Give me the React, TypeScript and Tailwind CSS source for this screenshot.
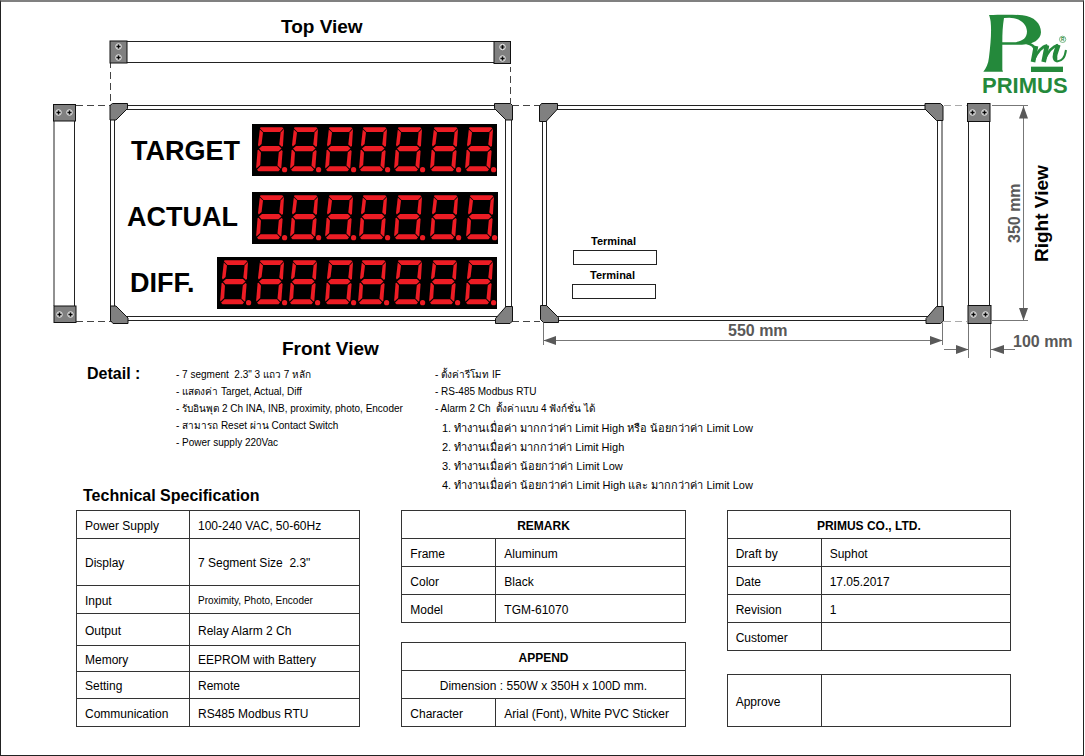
import type { ReactNode } from "react";

const SEGMENTS = [
  "4.5,3.3 26,3.3 27.5,4.2 24,8 7.5,8 4,4.5",
  "3.8,5.5 7,8.6 5.6,20 2.8,22.6 2,21",
  "28,5 27,21.5 26,23 23.3,20.5 24.6,8.5",
  "3,24.5 6,22 23,22 25.5,24.5 22.5,27.3 5.5,27.3",
  "1.6,26 2.6,25.8 5,28.4 4.2,41 .5,44.5 .2,43",
  "25.5,26 26.6,27 25.3,44 24.5,44.5 21.5,41.5 22.8,28.2",
  "4.5,42.3 21,42.3 24,45.5 22.5,47.3 2.5,47.3 1,45.8",
];

function Led({ x, y, width, digits }: { x: number; y: number; width: number; digits: number[] }) {
  return (
    <g>
      <rect x={x} y={y} width={width} height="52" fill="#000" />
      {digits.map((d) => (
        <g key={d} transform={`translate(${d} ${y})`} fill="#ed1c24">
          {SEGMENTS.map((points) => (
            <polygon key={points} points={points} />
          ))}
          <circle cx="28.6" cy="45.7" r="2.6" />
        </g>
      ))}
    </g>
  );
}

function Screw({ x, y }: { x: number; y: number }) {
  return (
    <g transform={`translate(${x} ${y})`} fill="none">
      <circle r="2.8" fill="#888" stroke="#e6e6e6" strokeWidth="1" />
      <path d="M-1.9 0H1.9M0-1.9V1.9" stroke="#000" strokeWidth="0.9" />
    </g>
  );
}

type Box = [number, number, number, number];

function Bracket({ box: [x, y, w, h], screws }: { box: Box; screws: [number, number][] }) {
  return (
    <g>
      <rect x={x} y={y} width={w} height={h} fill="#808080" stroke="#111" />
      {screws.map(([sx, sy]) => (
        <Screw key={`${sx}-${sy}`} x={sx} y={sy} />
      ))}
    </g>
  );
}

const CORNERS = [
  "110,105.5 112.5,103.5 127.5,103.5 127.5,108.5 116,120 110,120",
  "494.5,103.5 510.5,103.5 512.5,105.5 512.5,120 506,120 494.5,108.5",
  "110.5,306 116,306 128,318 128,323.5 113,323.5 110.5,320.5",
  "506,306.5 512.5,306.5 512.5,321 510,323.5 495.5,323.5 495.5,318.5",
  "539.5,106 541.5,103.5 557.5,103.5 557.5,109 546,121.5 539.5,121.5",
  "925,103.5 940.5,103.5 943,106 943,120.5 936.5,120.5 925,109",
  "540.5,305.5 546.5,305.5 558.5,317.5 558.5,322.5 543.5,322.5 540.5,319.5",
  "936.5,306.5 943.5,306.5 943.5,321 940.5,323.5 926,323.5 926,318.5",
];

function Logo() {
  return (
    <g>
      <g transform="translate(900 0) scale(.3333)" fill="#24893b">
        <path
          fillRule="evenodd"
          d="M267 45C300 44 340 43 368 46C402 50 423 70 423 97C422 119 400 134 366 134L307 134L307 209L309 215H250C258 206 265 192 267 172C272 130 275 95 272 65C271 57 269 50 267 45ZM312 54C308 78 307 100 307 127L340 127C366 126 381 115 381 94C380 70 358 54 328 53Z"
        />
        <g fill="none" stroke="#24893b">
          <path d="M380 129C395 132 404 140 406 152" strokeWidth="8" />
          <path d="M408 138L399 186M441 136L431 186" strokeWidth="14" />
          <path d="M401 180C410 160 422 140 442 136M433 180C442 160 455 139 474 135" strokeWidth="8" />
          <path d="M475 134L466 162C463 174 466 180 472 180" strokeWidth="14" />
          <path d="M468 183C486 187 495 172 498 150" strokeWidth="6" />
        </g>
        <rect x="393" y="200" width="96" height="16" />
        <circle cx="488" cy="118" r="9.5" fill="none" stroke="#24893b" strokeWidth="1.8" />
        <text x="488" y="123" fontSize="14" fontWeight="700" textAnchor="middle">R</text>
      </g>
      <text x="982" y="93" fontSize="22" fontWeight="700" fill="#24893b">PRIMUS</text>
    </g>
  );
}

function Drawing() {
  return (
    <svg viewBox="1 2 1082 358" className="block h-auto w-full" role="img" aria-label="Display board views">
      <g fontWeight="700">
        <text x="281" y="33" fontSize="19">Top View</text>
        <text x="282" y="355" fontSize="19">Front View</text>
        <text x="131" y="160" fontSize="27">TARGET</text>
        <text x="127" y="226" fontSize="27">ACTUAL</text>
        <text x="130" y="292" fontSize="27">DIFF.</text>
        <text x="591" y="245" fontSize="11">Terminal</text>
        <text x="590" y="279" fontSize="11">Terminal</text>
        <text transform="translate(1048 262) rotate(-90)" fontSize="19">Right View</text>
        <g fill="#595959" fontSize="16">
          <text x="728" y="336">550 mm</text>
          <text x="1013" y="347">100 mm</text>
          <text transform="translate(1020 243) rotate(-90)">350 mm</text>
        </g>
      </g>

      <g fill="none" stroke="#222">
        <path d="M127 41.5H494M127 62.5H494" />
        <path d="M54 121V306M968.5 121V306M989.5 121V306" />
        <path d="M74.5 121V306" />
        <rect x="110.5" y="105.5" width="401" height="215" />
        <rect x="114.5" y="109.5" width="391" height="207" />
        <rect x="542.5" y="105.5" width="399.5" height="215" />
        <rect x="546.5" y="109.5" width="391" height="207" />
        <rect x="573.5" y="250.5" width="83" height="14" />
        <rect x="572.5" y="284.5" width="83" height="14" />
      </g>

      <g fill="none" stroke="#444" strokeDasharray="7 4">
        <path d="M110.5 63V104M510.5 67V103" strokeDashoffset="2" />
        <path d="M76 105.5H110M76 321.5H112" />
        <path d="M512 105.5H540M512 321.5H540" />
        <path d="M944 105.5H967M944 321.5H967" stroke="#aaa" />
      </g>

      <g fill="#808080" stroke="#111">
        {CORNERS.map((points) => (
          <polygon key={points} points={points} />
        ))}
      </g>
      <Bracket box={[110, 41, 17, 22]} screws={[[118.5, 46.5], [118.5, 57.5]]} />
      <Bracket box={[494, 41.5, 16.5, 22]} screws={[[502.5, 47], [502.5, 58.5]]} />
      <Bracket box={[53.5, 104.5, 22, 16.5]} screws={[[58.5, 112.5], [69.5, 112.5]]} />
      <Bracket box={[54, 306, 22, 16.5]} screws={[[59.5, 314.5], [70.5, 314.5]]} />
      <Bracket box={[967.5, 103.5, 22.5, 18]} screws={[[972.5, 112.5], [984.5, 112.5]]} />
      <Bracket box={[968, 305.5, 23, 18]} screws={[[973.5, 314.5], [985.5, 314.5]]} />

      <g fill="none" stroke="#777">
        <path d="M992 105.5H1028M992 320.5H1028M1023.5 106V320" />
        <path d="M543.5 323V345M942.5 323V345M543 340.5H942" />
        <path d="M968.5 324V358M990.5 324V358M944 349.5H968M991 349.5H1015" />
      </g>
      <g fill="#595959">
        <path d="M1023.5 106L1028 118.5H1019ZM1023.5 320.5L1028 308H1019Z" />
        <path d="M543.5 340.5L556 336V345ZM942.5 340.5L930 336V345Z" />
        <path d="M968.5 349.5L956 345V354ZM991 349.5L1004 345V354Z" />
      </g>

      <Led x={252} y={124} width={245} digits={[256, 290, 325, 359, 394, 430, 465]} />
      <Led x={252} y={192} width={246} digits={[256, 290, 325, 359, 394, 430, 466]} />
      <Led x={217} y={257} width={280} digits={[220, 256, 289, 325, 358, 394, 429, 465]} />
      <Logo />
    </svg>
  );
}

function Sheet({ split, children }: { split: string; children: ReactNode }) {
  return (
    <table className="w-full table-fixed border-collapse border border-[#333] text-left text-[12px] leading-4">
      <colgroup>
        <col className={split} />
        <col />
      </colgroup>
      <tbody>{children}</tbody>
    </table>
  );
}

function Row({ label, value, height = "h-[28px]", small = false }: { label: string; value?: string; height?: string; small?: boolean }) {
  return (
    <tr className={height}>
      <th scope="row" className="border border-[#333] px-2 py-0 pt-0.5 font-normal">{label}</th>
      <td className={`whitespace-pre border border-[#333] px-2 py-0 pt-0.5 ${small ? "text-[10px]" : ""}`}>{value}</td>
    </tr>
  );
}

function Title({ children }: { children: ReactNode }) {
  return (
    <tr className="h-[28px]">
      <th colSpan={2} scope="colgroup" className="border border-[#333] py-0 pt-0.5 text-center font-bold">{children}</th>
    </tr>
  );
}

export default function App() {
  return (
    <main className="mr-px border border-t-2 border-[#222] border-t-[#808080] bg-white pb-[28px] font-['Liberation_Sans','Noto_Sans',sans-serif] text-black">
      <Drawing />

      <section className="flex items-start pl-[86px] pt-1">
        <h2 className="w-[89px] shrink-0 text-base leading-5 font-bold">Detail :</h2>
        <ul className="w-[259px] shrink-0 whitespace-pre pt-0.5 text-[10px] leading-[17px]">
          <li>- 7 segment  2.3" 3 แถว 7 หลัก</li>
          <li>- แสดงค่า Target, Actual, Diff</li>
          <li>- รับอินพุต 2 Ch INA, INB, proximity, photo, Encoder</li>
          <li>- สามารถ Reset ผ่าน Contact Switch</li>
          <li>- Power supply 220Vac</li>
        </ul>
        <div className="whitespace-pre pt-0.5">
          <ul className="text-[10px] leading-[17px]">
            <li>- ตั้งค่ารีโมท IF</li>
            <li>- RS-485 Modbus RTU</li>
            <li>- Alarm 2 Ch  ตั้งค่าแบบ 4 ฟังก์ชั่น ได้</li>
          </ul>
          <ol className="pt-0.5 pl-[7px] text-[11px] leading-[19px]">
            <li>1. ทำงานเมื่อค่า มากกว่าค่า Limit High หรือ น้อยกว่าค่า Limit Low</li>
            <li>2. ทำงานเมื่อค่า มากกว่าค่า Limit High</li>
            <li>3. ทำงานเมื่อค่า น้อยกว่าค่า Limit Low</li>
            <li>4. ทำงานเมื่อค่า น้อยกว่าค่า Limit High และ มากกว่าค่า Limit Low</li>
          </ol>
        </div>
      </section>

      <h2 className="-mt-[9px] pl-[82px] text-base leading-5 font-bold">Technical Specification</h2>

      <section className="grid grid-cols-3 gap-x-[41px] pt-1 pr-[72px] pl-[75px]">
        <Sheet split="w-[113px]">
          <Row label="Power Supply" value="100-240 VAC, 50-60Hz" />
          <Row label="Display" value={'7 Segment Size  2.3"'} height="h-[47px]" />
          <Row label="Input" value="Proximity, Photo, Encoder" small />
          <Row label="Output" value="Relay Alarm 2 Ch" height="h-[32px]" />
          <Row label="Memory" value="EEPROM with Battery" height="h-[26px]" />
          <Row label="Setting" value="Remote" height="h-[27px]" />
          <Row label="Communication" value="RS485 Modbus RTU" />
        </Sheet>
        <div className="flex flex-col justify-between">
          <Sheet split="w-[94px]">
            <Title>REMARK</Title>
            <Row label="Frame" value="Aluminum" />
            <Row label="Color" value="Black" />
            <Row label="Model" value="TGM-61070" />
          </Sheet>
          <Sheet split="w-[94px]">
            <Title>APPEND</Title>
            <tr className="h-[28px]">
              <td colSpan={2} className="border border-[#333] py-0 pt-0.5 text-center">Dimension : 550W x 350H x 100D mm.</td>
            </tr>
            <Row label="Character" value="Arial (Font), White PVC Sticker" />
          </Sheet>
        </div>
        <div className="flex flex-col justify-between">
          <Sheet split="w-[94px]">
            <Title>PRIMUS CO., LTD.</Title>
            <Row label="Draft by" value="Suphot" />
            <Row label="Date" value="17.05.2017" />
            <Row label="Revision" value="1" />
            <Row label="Customer" />
          </Sheet>
          <Sheet split="w-[94px]">
            <Row label="Approve" height="h-[52px]" />
          </Sheet>
        </div>
      </section>
    </main>
  );
}
